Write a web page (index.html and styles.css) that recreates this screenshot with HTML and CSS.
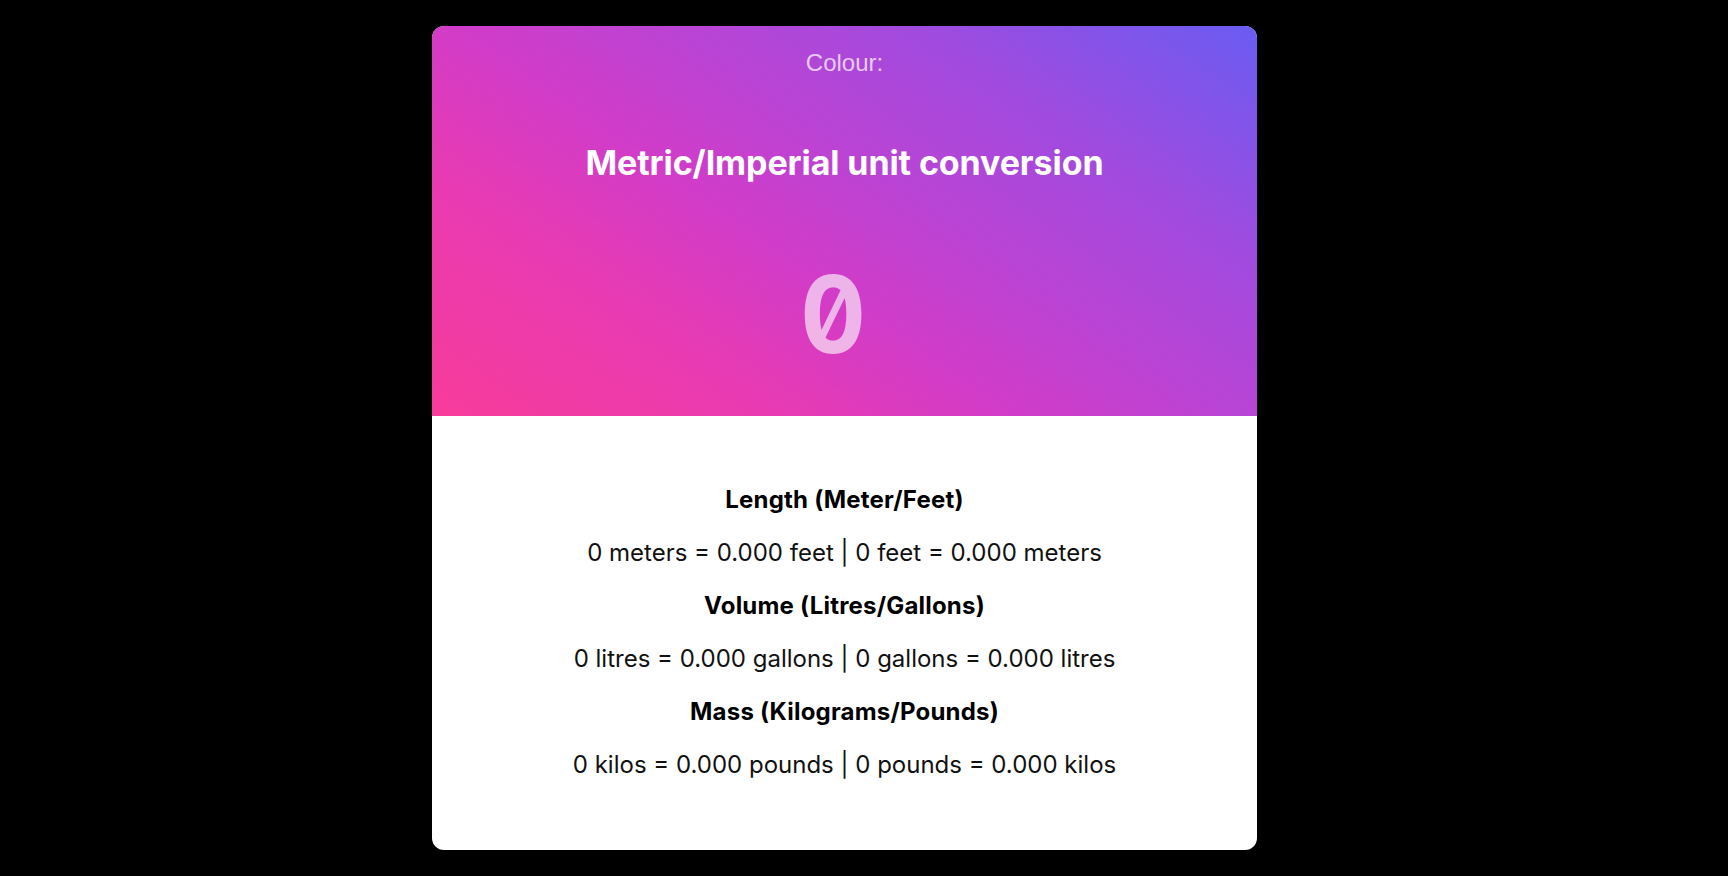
FILE: index.html
```html
<!DOCTYPE html>
<html lang="en">
<head>
<meta charset="utf-8">
<title>Metric/Imperial unit conversion</title>
<link rel="stylesheet" href="styles.css">
</head>
<body>
<div class="page">
  <main class="card">
    <section class="hero">
      <label class="colour">Colour:</label>
      <h1 class="title">Metric/Imperial unit conversion</h1>
      <div class="value">0</div>
    </section>
    <section class="results">
      <h2 class="heading">Length (Meter/Feet)</h2>
      <p class="line">0 meters = 0.000 feet <span class="sep">|</span> 0 feet = 0.000 meters</p>
      <h2 class="heading">Volume (Litres/Gallons)</h2>
      <p class="line">0 litres = 0.000 gallons <span class="sep">|</span> 0 gallons = 0.000 litres</p>
      <h2 class="heading">Mass (Kilograms/Pounds)</h2>
      <p class="line">0 kilos = 0.000 pounds <span class="sep">|</span> 0 pounds = 0.000 kilos</p>
    </section>
  </main>
</div>
</body>
</html>
```

FILE: styles.css
```css
html, body {
  margin: 0;
  padding: 0;
  background: #000;
  height: 100%;
}
.page {
  display: flex;
  justify-content: center;
  padding: 26px 39px 0 0;
}
.card {
  width: 825px;
  border-radius: 12px;
  overflow: hidden;
  background: #fff;
  font-family: Inter, "Noto Sans", sans-serif;
}
.hero {
  height: 390px;
  box-sizing: border-box;
  display: flex;
  flex-direction: column;
  align-items: center;
  background: linear-gradient(35deg, #f83c9a 0%, #e83ab2 25%, #d13cc8 42%, #b745d6 60%, #a14ade 75%, #6a5cf2 100%);
  padding-top: 19px;
}
.colour {
  font-family: "Liberation Sans", Arial, sans-serif;
  font-size: 24px;
  line-height: 36px;
  color: rgba(255, 255, 255, 0.72);
}
.title {
  margin: 62px 0 0;
  font-size: 34px;
  line-height: 40px;
  font-weight: 700;
  color: #fff;
  letter-spacing: -0.1px;
}
.value {
  margin-top: 76px;
  padding-right: 24px;
  font-family: Inter, sans-serif;
  font-feature-settings: "zero" 1, "tnum" 1;
  font-weight: 700;
  font-size: 107px;
  line-height: 110px;
  color: rgba(255, 255, 255, 0.62);
  transform: scaleX(0.95);
}
.results {
  display: flex;
  flex-direction: column;
  align-items: center;
  gap: 25px;
  padding: 70px 0 71px;
  color: #111;
}
.heading {
  margin: 0;
  font-size: 24px;
  line-height: 28px;
  font-weight: 700;
  letter-spacing: 0.2px;
  color: #000;
}
.line {
  margin: 0;
  font-size: 24px;
  line-height: 28px;
  font-weight: 400;
}
```
